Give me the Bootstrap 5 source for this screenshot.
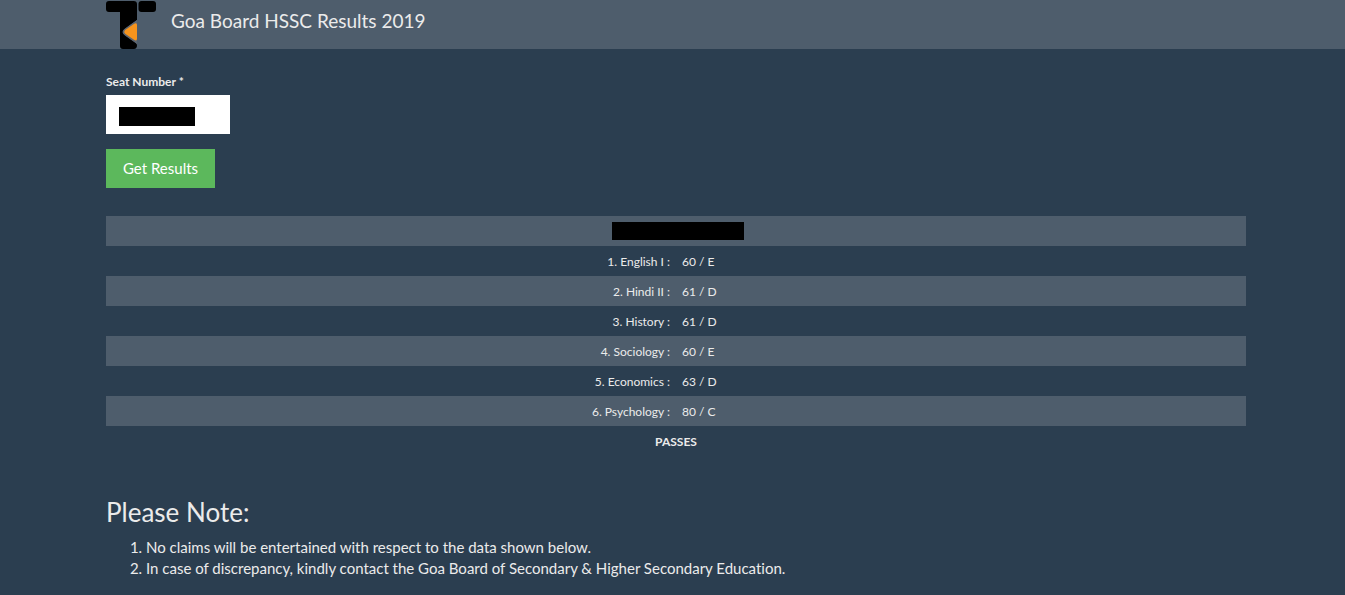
<!DOCTYPE html>
<html lang="en">
<head>
<meta charset="utf-8">
<meta name="viewport" content="width=device-width, initial-scale=1">
<title>Goa Board HSSC Results 2019</title>
<link href="https://cdn.jsdelivr.net/npm/bootstrap@5.3.0/dist/css/bootstrap.min.css" rel="stylesheet">
<style>
  body { background: #2b3e50; color: #ebebeb; font: 15px/21px Lato, sans-serif; font-variant-ligatures: none; }
  .site-bar { background: #4e5d6c; }
  .page-gutter { padding-left: 7px; }
  .page-gutter > .container { max-width: 1170px; padding: 0 15px; }
  .site-bar .navbar-brand { color: #ebebeb; font-size: 19px; line-height: 21px; gap: 15px; }
  .brand-text { padding-top: 10px; }
  .site-bar svg { width: 50px; height: 49px; }
  .seat-label { font-size: 12px; line-height: 17px; margin-bottom: 5px; }
  .seat-field { width: 124px; margin-bottom: 15px; }
  .seat-field .form-control { height: 39px; border: 0; border-radius: 0; }
  .redacted { background: #000; display: block; }
  .seat-field .redacted { left: 13px; top: 12px; width: 76px; height: 19px; pointer-events: none; }
  .btn-results { background: #5cb85c; color: #fff; border: 0; border-radius: 0; font-size: 15px; line-height: 21px; padding: 9px 17px; }
  .btn-results:hover { background: #449d44; color: #fff; }
  .results { font-size: 12px; line-height: 18px; margin: 28px 0 42px; table-layout: fixed; width: 100%; }
  .results tr { height: 30px; }
  .results td, .results th { padding: 7px 6px 5px; font-weight: 400; }
  .results tr:nth-child(odd) { background: #4e5d6c; }
  .results tr:last-child td { font-weight: 700; }
  .results .name-cell { padding: 6px 6px 6px 10px; }
  .results .redacted { width: 132px; height: 18px; }
  .note-title { font-size: 26px; line-height: 29px; font-weight: 400; margin: 0 0 10px; }
  .notes { padding-left: 40px; margin-bottom: 10px; }
</style>
</head>
<body>
<header class="site-bar page-gutter">
  <div class="container d-flex align-items-start">
    <a class="navbar-brand d-flex align-items-start m-0 p-0" href="#">
      <svg viewBox="0 0 50 49" aria-hidden="true">
        <path d="M3 1H27.500Q31 1 31 4V20L20 28Q14 32 20 36L30 43Q31 44 31 46Q30.500 49 28 49H17Q14 49 14 46V12H3Q0 12 0 9V4Q0 1 3 1Z"/>
        <rect x="32.500" y="1" width="17.500" height="11" rx="3"/>
        <path fill="#5c6570" d="M31 20L19 28.500Q14 32 19 35.500L31 44Z"/>
        <path fill="#f7941d" d="M27.500 24.200Q31 22 31 25V38.500Q31 41.500 28 39.800L19.500 34Q17 32 19.500 29.800Z"/>
      </svg>
      <span class="brand-text">Goa Board HSSC Results 2019</span>
    </a>
  </div>
</header>
<main class="page-gutter">
  <div class="container">
    <form class="pt-4" onsubmit="return false">
      <label class="seat-label fw-bold d-block" for="seat">Seat Number *</label>
      <div class="seat-field position-relative">
        <input class="form-control" type="text" id="seat">
        <span class="redacted position-absolute"></span>
      </div>
      <button class="btn btn-results" type="submit">Get Results</button>
    </form>
    <table class="results">
      <tbody>
        <tr><td class="name-cell" colspan="2"><span class="redacted mx-auto"></span></td></tr>
        <tr><th class="text-end" scope="row">1. English I :</th><td>60 / E</td></tr>
        <tr><th class="text-end" scope="row">2. Hindi II :</th><td>61 / D</td></tr>
        <tr><th class="text-end" scope="row">3. History :</th><td>61 / D</td></tr>
        <tr><th class="text-end" scope="row">4. Sociology :</th><td>60 / E</td></tr>
        <tr><th class="text-end" scope="row">5. Economics :</th><td>63 / D</td></tr>
        <tr><th class="text-end" scope="row">6. Psychology :</th><td>80 / C</td></tr>
        <tr><td colspan="2" class="text-center">PASSES</td></tr>
      </tbody>
    </table>
    <h2 class="note-title">Please Note:</h2>
    <ol class="notes">
      <li>No claims will be entertained with respect to the data shown below.</li>
      <li>In case of discrepancy, kindly contact the Goa Board of Secondary &amp; Higher Secondary Education.</li>
    </ol>
  </div>
</main>
</body>
</html>
